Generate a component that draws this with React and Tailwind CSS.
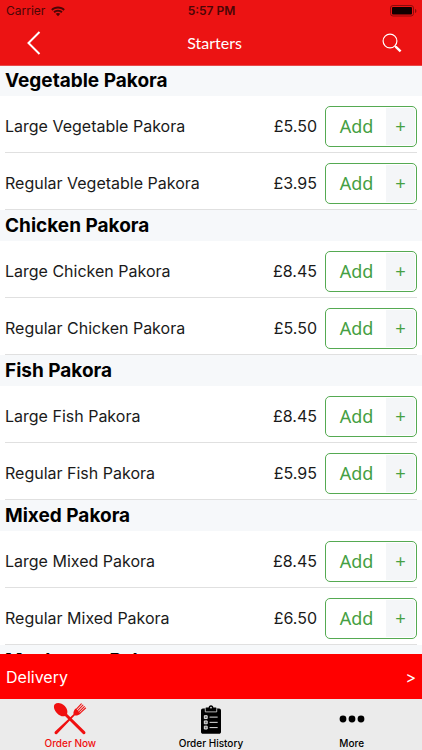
import React, { useState } from 'react';

const menu = [
  {
    title: 'Vegetable Pakora',
    items: [
      { name: 'Large Vegetable Pakora', price: '£5.50' },
      { name: 'Regular Vegetable Pakora', price: '£3.95' },
    ],
  },
  {
    title: 'Chicken Pakora',
    items: [
      { name: 'Large Chicken Pakora', price: '£8.45' },
      { name: 'Regular Chicken Pakora', price: '£5.50' },
    ],
  },
  {
    title: 'Fish Pakora',
    items: [
      { name: 'Large Fish Pakora', price: '£8.45' },
      { name: 'Regular Fish Pakora', price: '£5.95' },
    ],
  },
  {
    title: 'Mixed Pakora',
    items: [
      { name: 'Large Mixed Pakora', price: '£8.45' },
      { name: 'Regular Mixed Pakora', price: '£6.50' },
    ],
  },
  { title: 'Mushroom Pakora', items: [] },
];

const WifiIcon = () => (
  <svg width="14" height="11" viewBox="0 0 14 11" fill="currentColor" aria-hidden="true">
    <path d="M7 0.6C4.3 0.6 1.9 1.6 0.2 3.3L1.5 4.7C2.9 3.3 4.9 2.5 7 2.5s4.1 0.8 5.5 2.2l1.3-1.4C12.1 1.6 9.7 0.6 7 0.6z" />
    <path d="M7 3.8c-1.8 0-3.4 0.7-4.6 1.8l1.3 1.4C4.6 6.2 5.7 5.7 7 5.7s2.4 0.5 3.3 1.3l1.3-1.4C10.4 4.5 8.8 3.8 7 3.8z" />
    <path d="M7 6.9c-0.9 0-1.7 0.3-2.3 0.9L7 10.3l2.3-2.5C8.7 7.2 7.9 6.9 7 6.9z" />
  </svg>
);

const BatteryIcon = () => (
  <svg width="27" height="12" viewBox="0 0 27 12" aria-hidden="true">
    <rect x="0.5" y="0.5" width="23" height="10.5" rx="2.5" fill="none" stroke="#8a0b0b" />
    <rect x="2" y="2" width="20" height="7.5" rx="1" fill="#100" />
    <path d="M25 4v4c0.9-0.3 1.4-1.1 1.4-2S25.9 4.3 25 4z" fill="#8a0b0b" />
  </svg>
);

const BackIcon = () => (
  <svg width="14" height="24" viewBox="0 0 14 24" fill="none" stroke="currentColor" strokeWidth="2" aria-hidden="true">
    <path d="M12.5 1L1.5 12l11 11" />
  </svg>
);

const SearchIcon = () => (
  <svg width="20" height="20" viewBox="0 0 20 20" fill="none" stroke="currentColor" aria-hidden="true">
    <circle cx="8" cy="8" r="6.9" strokeWidth="1.2" />
    <path d="M12.8 12.8l1.5 1.5" strokeWidth="1.2" />
    <path d="M13.6 13.6l5 4.8" strokeWidth="2.4" />
  </svg>
);

const CutleryIcon = () => (
  <svg width="34" height="34" viewBox="0 0 34 34" fill="currentColor" aria-hidden="true">
    {/* spoon */}
    <path d="M1.8 2.2C4 0.3 8.7 0.8 11.8 4c2.400 2.500 3.100 5.400 2.300 8L32 29.600c1.500 1.600-0.600 3.700-2.200 2.200L12 14c-2.600 0.700-5.500-0.200-7.700-2.600C1.200 8.200 0 4.200 1.800 2.200z" />
    {/* fork */}
    <path d="M22.600 6.600l4.900 4.900c-1.700 1.700-3.900 2.300-5.900 1.900L4.200 31.800c-1.600 1.500-3.700-0.600-2.200-2.200L20.500 12.200c-0.300-2 0.400-4 2.100-5.600z" />
    <path
      d="M23.200 7.300L28.300 1.800M24.600 8.600L29.900 3.200M26 9.800L31.300 4.600M27.100 11.100L32.600 6"
      fill="none"
      stroke="currentColor"
      strokeWidth="1.1"
      strokeLinecap="round"
    />
  </svg>
);

const ClipboardIcon = () => (
  <svg width="20" height="31" viewBox="0 0 21 31" aria-hidden="true">
    <path d="M2 4h3V3h3c0-1.500 1-2.500 2.500-2.500S13 1.500 13 3h3v1h3c1.100 0 2 0.900 2 2v22.500c0 1.100-0.900 2-2 2H2c-1.100 0-2-0.900-2-2V6c0-1.100 0.900-2 2-2z" fill="currentColor" />
    <path d="M4.500 4v3.500h12V4" fill="none" stroke="#ebebeb" strokeWidth="0.8" />
    <circle cx="10.500" cy="3" r="0.9" fill="#ebebeb" />
    <g fill="#777777" stroke="#ebebeb" strokeWidth="1">
      <path d="M3.500 11.500h3v3h-3zM3.500 17h3v3h-3zM3.500 22.500h3v3h-3z" />
      <path d="M9 13h8.500M9 18.500h8.500M9 24h8.500" />
    </g>
  </svg>
);

const MoreIcon = () => (
  <svg width="26" height="8" viewBox="0 0 26 8" fill="currentColor" aria-hidden="true">
    <circle cx="4" cy="4" r="3.4" />
    <circle cx="13" cy="4" r="3.4" />
    <circle cx="22" cy="4" r="3.4" />
  </svg>
);

const tabs = [
  { id: 'order', label: 'Order Now', Icon: CutleryIcon },
  { id: 'history', label: 'Order History', Icon: ClipboardIcon },
  { id: 'more', label: 'More', Icon: MoreIcon },
];

const MenuItem = ({ item }) => (
  <li className="mx-[5px] flex h-[57px] items-center border-b border-[#e0e0e0] pt-1">
    <span className="flex-1 text-base text-[#1a1a1a]">{item.name}</span>
    <span className="mr-2 text-base text-[#1a1a1a]">{item.price}</span>
    <div className="flex h-[41px] w-[92px] rounded-[5px] border border-[#55aa52] p-px text-[#45a043]">
      <button type="button" aria-label={`Add ${item.name}`} className="flex-1 font-['Noto_Sans',sans-serif] text-lg">
        Add
      </button>
      <button type="button" aria-label={`More options for ${item.name}`} className="w-[29px] rounded-r-[3px] bg-[#f4f6f8] font-['Lato',sans-serif] text-lg">
        +
      </button>
    </div>
  </li>
);

const App = () => {
  const [activeTab, setActiveTab] = useState('order');

  return (
    <div className="flex h-screen flex-col bg-white font-['Inter',sans-serif]">
      {/* Status bar and title */}
      <header className="relative z-10 -mb-px h-[66px] shrink-0 border-b border-[#e84a4a] bg-[#ec1313]">
        <div className="grid h-[22px] grid-cols-3 items-center pl-[6px] pr-[5px] text-xs text-[#4a0606]">
          <div className="flex items-center gap-1.5">
            <span>Carrier</span>
            <WifiIcon />
          </div>
          <span className="text-center font-semibold">5:57 PM</span>
          <div className="flex justify-end">
            <BatteryIcon />
          </div>
        </div>
        <div className="grid h-[42px] grid-cols-3 items-center pl-[27px] pr-5 text-white">
          <button type="button" aria-label="Back" className="w-5">
            <BackIcon />
          </button>
          <h1 className="text-center font-['Lato',sans-serif] text-base">Starters</h1>
          <button type="button" aria-label="Search" className="justify-self-end">
            <SearchIcon />
          </button>
        </div>
      </header>

      {/* Menu list */}
      <main className="min-h-0 flex-1 overflow-y-auto [scrollbar-width:none]">
        {menu.map((section) => (
          <section key={section.title}>
            <h2 className="h-[31px] bg-[#f6f8fa] pl-[5px] text-[19px] leading-[31px] font-bold text-black">
              {section.title}
            </h2>
            <ul>
              {section.items.map((item) => (
                <MenuItem key={item.name} item={item} />
              ))}
            </ul>
          </section>
        ))}
      </main>

      <button
        type="button"
        className="flex h-[45px] shrink-0 items-center justify-between bg-[#ff0000] px-[6px] text-base text-white"
      >
        <span>Delivery</span>
        <span>&gt;</span>
      </button>

      {/* Bottom tabs */}
      <nav className="grid h-[51px] shrink-0 grid-cols-3 bg-[#ebebeb]">
        {tabs.map(({ id, label, Icon }) => (
          <button
            key={id}
            type="button"
            onClick={() => setActiveTab(id)}
            className={`flex flex-col items-center gap-px pt-1 text-[10px] leading-[14px] font-medium ${
              activeTab === id ? 'text-[#f01010]' : 'text-black'
            }`}
          >
            <span className="flex h-8 items-center">
              <Icon />
            </span>
            {label}
          </button>
        ))}
      </nav>
    </div>
  );
};

export default App;
